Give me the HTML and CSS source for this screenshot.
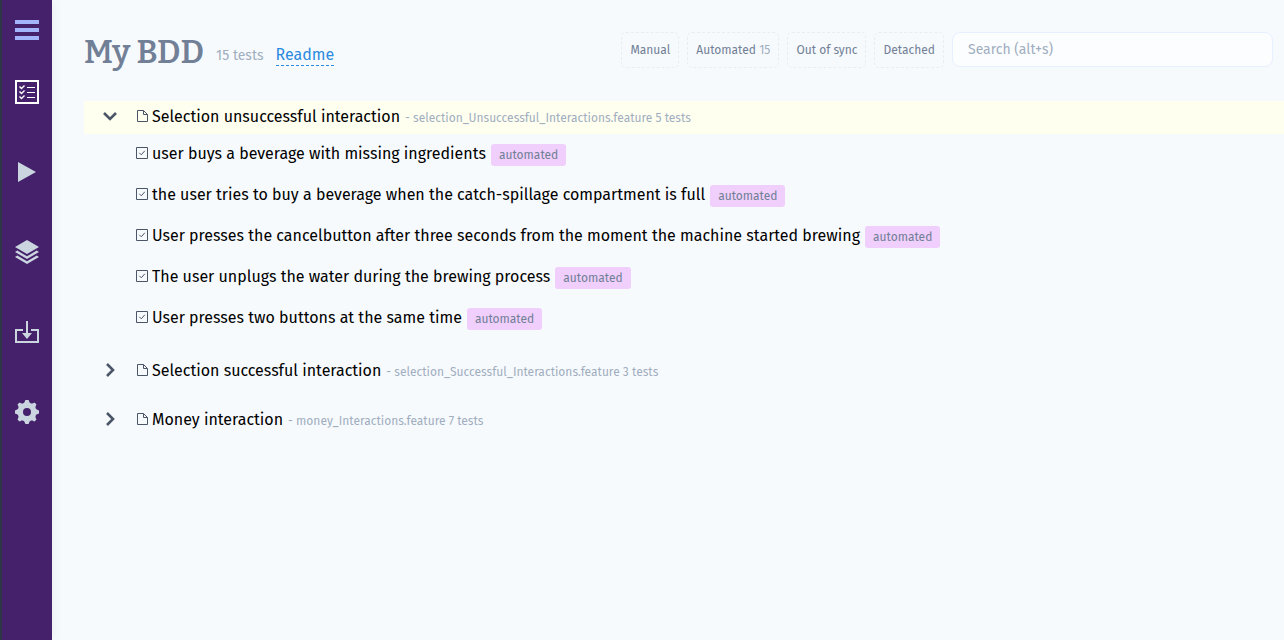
FILE: index.html
```html
<!DOCTYPE html>
<html lang="en">
<head>
<meta charset="utf-8">
<title>My BDD</title>
<link rel="stylesheet" href="styles.css">
</head>
<body>
<svg class="symbols" aria-hidden="true">
  <symbol id="file" viewBox="0 0 12 14"><path d="M1.500 1.500h6l4 4v7h-10z M7.500 1.500v4h4" fill="none" stroke="#4a5568"/></symbol>
  <symbol id="check" viewBox="0 0 12 14"><path d="M.5 1.500h11v11H.5z M3.300 6.800l2 2 3.500-4" fill="none" stroke="#4a5568"/></symbol>
  <symbol id="chevron" viewBox="0 0 16 16"><path d="M5 2l6 6-6 6" fill="none" stroke="#4a5568" stroke-width="2.600"/></symbol>
</svg>
<div class="app">
  <nav class="sidebar" aria-label="Main">
    <button class="nav-item menu" aria-label="Menu"><svg viewBox="0 0 24 24"><path d="M0 2h24v4H0zM0 10h24v4H0zM0 18h24v4H0z"/></svg></button>
    <a class="nav-item active" href="#tests" aria-label="Tests"><svg viewBox="0 0 24 24" fill="none" stroke="#fff"><path d="M1 1h22v22H1z" stroke-width="2"/><path d="M12 7.500h8M12 12.500h8M12 17.500h8"/><path d="M4.500 6.500l2 2 3-3M4.500 11.500l2 2 3-3M4.500 16.500l2 2 3-3" stroke-width="1.400"/></svg></a>
    <a class="nav-item" href="#runs" aria-label="Runs"><svg viewBox="0 0 24 24"><path d="M3 2v20l18-10z"/></svg></a>
    <a class="nav-item" href="#plans" aria-label="Plans"><svg viewBox="0 0 24 24"><path d="M12 0l12 7-12 7L0 7zM2.300 10.600L12 16.300l9.700-5.700L24 12l-12 7-12-7zM2.300 15.600L12 21.300l9.700-5.700L24 17l-12 7-12-7z"/></svg></a>
    <a class="nav-item" href="#imports" aria-label="Imports"><svg viewBox="0 0 24 24"><path d="M11 1h2v12h4l-5 6-5-6h4zM0 9h8v2H2v10h20V11h-6V9h8v14H0z"/></svg></a>
    <a class="nav-item" href="#settings" aria-label="Settings"><svg viewBox="0 0 24 24"><path fill-rule="evenodd" d="M24 13.600v-3.200c-1.700-.6-2.800-.8-3.300-2.100-.6-1.300.1-2.200.8-3.800l-2-2c-1.600.7-2.500 1.400-3.800.8C14.400 2.800 14.200 1.600 13.600 0h-3.200c-.6 1.600-.8 2.800-2.100 3.300-1.300.6-2.200-.1-3.800-.8l-2 2c.7 1.600 1.400 2.500.8 3.800C2.800 9.600 1.600 9.800 0 10.400v3.200c1.600.6 2.800.8 3.300 2.100.6 1.300-.1 2.200-.8 3.800l2 2c1.600-.7 2.500-1.400 3.800-.8 1.300.5 1.500 1.700 2.100 3.300h3.200c.6-1.600.8-2.800 2.100-3.300 1.300-.6 2.200.1 3.800.8l2-2c-.7-1.600-1.400-2.500-.8-3.800.5-1.300 1.600-1.500 3.300-2.100zM12 16a4 4 0 1 1 0-8 4 4 0 0 1 0 8z"/></svg></a>
  </nav>
  <main class="main">
    <header class="header">
      <div class="heading">
        <h1>My BDD</h1>
        <span class="count">15 tests</span>
        <a class="readme" href="#readme">Readme</a>
      </div>
      <div class="filters">
        <button class="filter">Manual</button>
        <button class="filter">Automated <span class="num">15</span></button>
        <button class="filter">Out of sync</button>
        <button class="filter">Detached</button>
        <input class="search" type="search" placeholder="Search (alt+s)" aria-label="Search">
      </div>
    </header>
    <section class="suite">
      <div class="suite-row open">
        <button class="toggle" aria-label="Collapse" aria-expanded="true"><svg><use href="#chevron"/></svg></button>
        <svg class="mark"><use href="#file"/></svg>
        <span class="title">Selection unsuccessful interaction</span>
        <span class="path">- selection_Unsuccessful_Interactions.feature 5 tests</span>
      </div>
      <ul class="tests">
        <li class="test"><svg class="mark"><use href="#check"/></svg><span class="title">user buys a beverage with missing ingredients</span><span class="tag">automated</span></li>
        <li class="test"><svg class="mark"><use href="#check"/></svg><span class="title">the user tries to buy a beverage when the catch-spillage compartment is full</span><span class="tag">automated</span></li>
        <li class="test"><svg class="mark"><use href="#check"/></svg><span class="title">User presses the cancelbutton after three seconds from the moment the machine started brewing</span><span class="tag">automated</span></li>
        <li class="test"><svg class="mark"><use href="#check"/></svg><span class="title">The user unplugs the water during the brewing process</span><span class="tag">automated</span></li>
        <li class="test"><svg class="mark"><use href="#check"/></svg><span class="title">User presses two buttons at the same time</span><span class="tag">automated</span></li>
      </ul>
    </section>
    <section class="suite">
      <div class="suite-row">
        <button class="toggle" aria-label="Expand" aria-expanded="false"><svg><use href="#chevron"/></svg></button>
        <svg class="mark"><use href="#file"/></svg>
        <span class="title">Selection successful interaction</span>
        <span class="path">- selection_Successful_Interactions.feature 3 tests</span>
      </div>
    </section>
    <section class="suite">
      <div class="suite-row">
        <button class="toggle" aria-label="Expand" aria-expanded="false"><svg><use href="#chevron"/></svg></button>
        <svg class="mark"><use href="#file"/></svg>
        <span class="title">Money interaction</span>
        <span class="path">- money_Interactions.feature 7 tests</span>
      </div>
    </section>
  </main>
</div>
</body>
</html>
```
FILE: styles.css
```css
* { box-sizing: border-box; }
body {
  margin: 0;
  background: #f7fafd;
  color: #000;
  font: 16px/24px "Fira Sans", "Noto Sans", sans-serif;
}
button, input { font: inherit; }
button { background: none; border: 0; padding: 0; cursor: pointer; }
.symbols { display: none; }
.app { display: flex; min-height: 100vh; }

.sidebar {
  flex: none;
  width: 52px;
  padding-top: 18px;
  display: flex;
  flex-direction: column;
  align-items: center;
  gap: 56px;
  background: #44216a;
  border-left: 2px solid #2d3748;
  box-shadow: 0 0 12px rgba(0, 0, 0, .06);
}
.nav-item { display: block; height: 24px; }
.nav-item svg { display: block; width: 24px; height: 24px; fill: #cbd5e0; }
.menu { margin-bottom: -18px; }
.menu svg { fill: #a3b4fa; }
.active svg { fill: none; }

.main { flex: 1; min-width: 0; padding: 32px 0 32px 32px; }
.header {
  display: flex;
  justify-content: space-between;
  align-items: flex-start;
  padding-right: 11px;
  margin-bottom: 29px;
}
.heading { display: flex; align-items: flex-start; gap: 12px; height: 40px; line-height: 20px; white-space: nowrap; }
h1 {
  margin: 0;
  color: #718096;
  font: 600 33px/40px "Bitter", "DejaVu Serif Condensed", serif;
}
.count, .readme { margin-top: 13px; }
.count { padding-top: 1px; color: #a0aec0; font-size: 14px; }
.readme { color: #2b8be0; text-decoration: none; border-bottom: 1px dashed; }
.filters { display: flex; gap: 8px; white-space: nowrap; }
.filter {
  height: 36px;
  padding: 0 8px 1px;
  border: 1px dashed #e9edf1;
  border-radius: 5px;
  color: #718096;
  font-size: 12px;
}
.num { color: #a0aec0; }
.search {
  width: 321px;
  height: 35px;
  padding: 0 15px;
  border: 1px solid #e6f0ff;
  border-radius: 8px;
  background: #fcfdff;
  font-size: 14px;
}
.search::placeholder { color: #a0aec0; }

.suite { margin-bottom: 16px; }
.suite-row { display: flex; align-items: center; height: 33px; padding: 0 0 2px 18px; white-space: nowrap; }
.open { background: #fffff0; }
.toggle { width: 16px; height: 16px; margin: 0 18px 2px 0; }
.toggle svg { display: block; width: 16px; height: 16px; }
.open .toggle svg { transform: rotate(90deg); }
.mark { flex: none; width: 12px; height: 14px; margin: 0 4px 2px 0; }
.title { margin-right: 5px; }
.path { color: #a0aec0; font-size: 12px; padding-top: 2px; }
.tests { list-style: none; margin: 0; padding: 0 0 0 52px; }
.test { display: flex; align-items: center; height: 41px; padding-bottom: 2px; white-space: nowrap; }
.tag {
  height: 22px;
  margin-top: 2px;
  padding: 0 8px;
  border-radius: 3px;
  background: #f0cffc;
  color: #718096;
  font-size: 12px;
  line-height: 22px;
}
```
